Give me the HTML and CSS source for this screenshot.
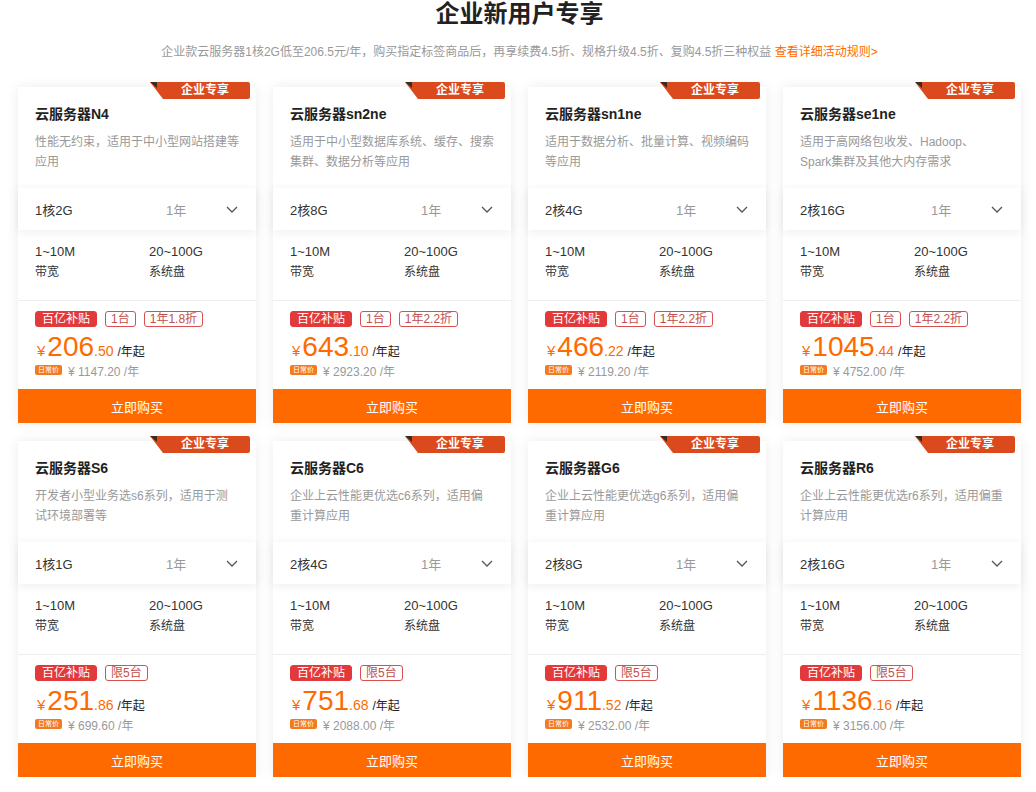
FILE: index.html
```html
<!DOCTYPE html>
<html lang="zh-CN">
<head>
    <meta charset="UTF-8">
    <meta name="viewport" content="width=device-width, initial-scale=1.0">
    <title>企业新用户专享</title>
    <link rel="stylesheet" href="styles.css">
</head>
<body>

    <div class="promo">
        <h1 class="promo-title">企业新用户专享</h1>
        <p class="promo-sub">企业款云服务器1核2G低至206.5元/年，购买指定标签商品后，再享续费4.5折、规格升级4.5折、复购4.5折三种权益 <a href="#">查看详细活动规则&gt;</a></p>

        <div class="card-grid">

            <!-- N4 -->
            <div class="card">
                <div class="badge">企业专享</div>
                <div class="card-head">
                    <div class="card-name">云服务器N4</div>
                    <div class="card-desc">性能无约束，适用于中小型网站搭建等应用</div>
                </div>
                <div class="spec-select">
                    <span class="spec-cpu">1核2G</span>
                    <span class="spec-year">1年</span>
                    <svg class="chevron" width="12" height="7" viewBox="0 0 12 7"><polyline points="1,1 6,6 11,1" fill="none" stroke="#555" stroke-width="1.3"/></svg>
                </div>
                <div class="spec-list">
                    <div><div class="spec-val">1~10M</div><div class="spec-lbl">带宽</div></div>
                    <div><div class="spec-val">20~100G</div><div class="spec-lbl">系统盘</div></div>
                </div>
                <div class="price-box">
                    <div class="tags"><span class="tag tag-red">百亿补贴</span><span class="tag">1台</span><span class="tag">1年1.8折</span></div>
                    <div class="price"><span class="yen">¥</span><span class="int">206</span><span class="dec">.50</span><span class="unit">/年起</span></div>
                    <div class="old-price"><span class="daily">日常价</span>¥ 1147.20 /年</div>
                </div>
                <button class="buy">立即购买</button>
            </div>

            <!-- sn2ne -->
            <div class="card">
                <div class="badge">企业专享</div>
                <div class="card-head">
                    <div class="card-name">云服务器sn2ne</div>
                    <div class="card-desc">适用于中小型数据库系统、缓存、搜索集群、数据分析等应用</div>
                </div>
                <div class="spec-select">
                    <span class="spec-cpu">2核8G</span>
                    <span class="spec-year">1年</span>
                    <svg class="chevron" width="12" height="7" viewBox="0 0 12 7"><polyline points="1,1 6,6 11,1" fill="none" stroke="#555" stroke-width="1.3"/></svg>
                </div>
                <div class="spec-list">
                    <div><div class="spec-val">1~10M</div><div class="spec-lbl">带宽</div></div>
                    <div><div class="spec-val">20~100G</div><div class="spec-lbl">系统盘</div></div>
                </div>
                <div class="price-box">
                    <div class="tags"><span class="tag tag-red">百亿补贴</span><span class="tag">1台</span><span class="tag">1年2.2折</span></div>
                    <div class="price"><span class="yen">¥</span><span class="int">643</span><span class="dec">.10</span><span class="unit">/年起</span></div>
                    <div class="old-price"><span class="daily">日常价</span>¥ 2923.20 /年</div>
                </div>
                <button class="buy">立即购买</button>
            </div>

            <!-- sn1ne -->
            <div class="card">
                <div class="badge">企业专享</div>
                <div class="card-head">
                    <div class="card-name">云服务器sn1ne</div>
                    <div class="card-desc">适用于数据分析、批量计算、视频编码等应用</div>
                </div>
                <div class="spec-select">
                    <span class="spec-cpu">2核4G</span>
                    <span class="spec-year">1年</span>
                    <svg class="chevron" width="12" height="7" viewBox="0 0 12 7"><polyline points="1,1 6,6 11,1" fill="none" stroke="#555" stroke-width="1.3"/></svg>
                </div>
                <div class="spec-list">
                    <div><div class="spec-val">1~10M</div><div class="spec-lbl">带宽</div></div>
                    <div><div class="spec-val">20~100G</div><div class="spec-lbl">系统盘</div></div>
                </div>
                <div class="price-box">
                    <div class="tags"><span class="tag tag-red">百亿补贴</span><span class="tag">1台</span><span class="tag">1年2.2折</span></div>
                    <div class="price"><span class="yen">¥</span><span class="int">466</span><span class="dec">.22</span><span class="unit">/年起</span></div>
                    <div class="old-price"><span class="daily">日常价</span>¥ 2119.20 /年</div>
                </div>
                <button class="buy">立即购买</button>
            </div>

            <!-- se1ne -->
            <div class="card">
                <div class="badge">企业专享</div>
                <div class="card-head">
                    <div class="card-name">云服务器se1ne</div>
                    <div class="card-desc">适用于高网络包收发、Hadoop、Spark集群及其他大内存需求</div>
                </div>
                <div class="spec-select">
                    <span class="spec-cpu">2核16G</span>
                    <span class="spec-year">1年</span>
                    <svg class="chevron" width="12" height="7" viewBox="0 0 12 7"><polyline points="1,1 6,6 11,1" fill="none" stroke="#555" stroke-width="1.3"/></svg>
                </div>
                <div class="spec-list">
                    <div><div class="spec-val">1~10M</div><div class="spec-lbl">带宽</div></div>
                    <div><div class="spec-val">20~100G</div><div class="spec-lbl">系统盘</div></div>
                </div>
                <div class="price-box">
                    <div class="tags"><span class="tag tag-red">百亿补贴</span><span class="tag">1台</span><span class="tag">1年2.2折</span></div>
                    <div class="price"><span class="yen">¥</span><span class="int">1045</span><span class="dec">.44</span><span class="unit">/年起</span></div>
                    <div class="old-price"><span class="daily">日常价</span>¥ 4752.00 /年</div>
                </div>
                <button class="buy">立即购买</button>
            </div>

            <!-- S6 -->
            <div class="card">
                <div class="badge">企业专享</div>
                <div class="card-head">
                    <div class="card-name">云服务器S6</div>
                    <div class="card-desc">开发者小型业务选s6系列，适用于测试环境部署等</div>
                </div>
                <div class="spec-select">
                    <span class="spec-cpu">1核1G</span>
                    <span class="spec-year">1年</span>
                    <svg class="chevron" width="12" height="7" viewBox="0 0 12 7"><polyline points="1,1 6,6 11,1" fill="none" stroke="#555" stroke-width="1.3"/></svg>
                </div>
                <div class="spec-list">
                    <div><div class="spec-val">1~10M</div><div class="spec-lbl">带宽</div></div>
                    <div><div class="spec-val">20~100G</div><div class="spec-lbl">系统盘</div></div>
                </div>
                <div class="price-box">
                    <div class="tags"><span class="tag tag-red">百亿补贴</span><span class="tag">限5台</span></div>
                    <div class="price"><span class="yen">¥</span><span class="int">251</span><span class="dec">.86</span><span class="unit">/年起</span></div>
                    <div class="old-price"><span class="daily">日常价</span>¥ 699.60 /年</div>
                </div>
                <button class="buy">立即购买</button>
            </div>

            <!-- C6 -->
            <div class="card">
                <div class="badge">企业专享</div>
                <div class="card-head">
                    <div class="card-name">云服务器C6</div>
                    <div class="card-desc">企业上云性能更优选c6系列，适用偏重计算应用</div>
                </div>
                <div class="spec-select">
                    <span class="spec-cpu">2核4G</span>
                    <span class="spec-year">1年</span>
                    <svg class="chevron" width="12" height="7" viewBox="0 0 12 7"><polyline points="1,1 6,6 11,1" fill="none" stroke="#555" stroke-width="1.3"/></svg>
                </div>
                <div class="spec-list">
                    <div><div class="spec-val">1~10M</div><div class="spec-lbl">带宽</div></div>
                    <div><div class="spec-val">20~100G</div><div class="spec-lbl">系统盘</div></div>
                </div>
                <div class="price-box">
                    <div class="tags"><span class="tag tag-red">百亿补贴</span><span class="tag">限5台</span></div>
                    <div class="price"><span class="yen">¥</span><span class="int">751</span><span class="dec">.68</span><span class="unit">/年起</span></div>
                    <div class="old-price"><span class="daily">日常价</span>¥ 2088.00 /年</div>
                </div>
                <button class="buy">立即购买</button>
            </div>

            <!-- G6 -->
            <div class="card">
                <div class="badge">企业专享</div>
                <div class="card-head">
                    <div class="card-name">云服务器G6</div>
                    <div class="card-desc">企业上云性能更优选g6系列，适用偏重计算应用</div>
                </div>
                <div class="spec-select">
                    <span class="spec-cpu">2核8G</span>
                    <span class="spec-year">1年</span>
                    <svg class="chevron" width="12" height="7" viewBox="0 0 12 7"><polyline points="1,1 6,6 11,1" fill="none" stroke="#555" stroke-width="1.3"/></svg>
                </div>
                <div class="spec-list">
                    <div><div class="spec-val">1~10M</div><div class="spec-lbl">带宽</div></div>
                    <div><div class="spec-val">20~100G</div><div class="spec-lbl">系统盘</div></div>
                </div>
                <div class="price-box">
                    <div class="tags"><span class="tag tag-red">百亿补贴</span><span class="tag">限5台</span></div>
                    <div class="price"><span class="yen">¥</span><span class="int">911</span><span class="dec">.52</span><span class="unit">/年起</span></div>
                    <div class="old-price"><span class="daily">日常价</span>¥ 2532.00 /年</div>
                </div>
                <button class="buy">立即购买</button>
            </div>

            <!-- R6 -->
            <div class="card">
                <div class="badge">企业专享</div>
                <div class="card-head">
                    <div class="card-name">云服务器R6</div>
                    <div class="card-desc">企业上云性能更优选r6系列，适用偏重计算应用</div>
                </div>
                <div class="spec-select">
                    <span class="spec-cpu">2核16G</span>
                    <span class="spec-year">1年</span>
                    <svg class="chevron" width="12" height="7" viewBox="0 0 12 7"><polyline points="1,1 6,6 11,1" fill="none" stroke="#555" stroke-width="1.3"/></svg>
                </div>
                <div class="spec-list">
                    <div><div class="spec-val">1~10M</div><div class="spec-lbl">带宽</div></div>
                    <div><div class="spec-val">20~100G</div><div class="spec-lbl">系统盘</div></div>
                </div>
                <div class="price-box">
                    <div class="tags"><span class="tag tag-red">百亿补贴</span><span class="tag">限5台</span></div>
                    <div class="price"><span class="yen">¥</span><span class="int">1136</span><span class="dec">.16</span><span class="unit">/年起</span></div>
                    <div class="old-price"><span class="daily">日常价</span>¥ 3156.00 /年</div>
                </div>
                <button class="buy">立即购买</button>
            </div>

        </div>
    </div>

</body>
</html>
```

FILE: styles.css
```css
/* página */
body {
    margin: 0;
    background-color: #fff;
    font-family: "Liberation Sans", Arial, "Noto Sans CJK SC", sans-serif;
    color: #333;
}

.promo {
    width: 1003px;
    margin: 0 0 0 18px;
}

.promo-title {
    margin: 0;
    font-size: 24px;
    line-height: 28px;
    font-weight: bold;
    color: #222;
    text-align: center;
}

.promo-sub {
    margin: 15px 0 0;
    font-size: 12px;
    line-height: 18px;
    color: #999;
    text-align: center;
}

.promo-sub a {
    color: #ff6a00;
    text-decoration: none;
}

.card-grid {
    display: grid;
    grid-template-columns: repeat(4, 238px);
    column-gap: 17px;
    row-gap: 18px;
    margin-top: 26px;
}

/* card */
.card {
    position: relative;
    background-color: #fff;
    box-shadow: 0 0 12px rgba(0, 0, 0, 0.08);
    display: flex;
    flex-direction: column;
}

.badge {
    position: absolute;
    top: -5px;
    right: 6px;
    width: 100px;
    height: 17px;
    padding-left: 10px;
    box-sizing: border-box;
    background-color: #db4a1d;
    color: #fff;
    font-size: 12px;
    font-weight: bold;
    line-height: 17px;
    text-align: center;
    clip-path: polygon(0 0, 100% 0, 100% 100%, 13px 100%);
    border-radius: 0 2px 2px 0;
}

.badge::before {
    content: "";
    position: absolute;
    left: 0;
    top: 0;
    width: 7px;
    height: 6px;
    background-color: #3b2a22;
    clip-path: polygon(0 0, 100% 0, 100% 100%);
}

.card-head {
    height: 101px;
    box-sizing: border-box;
    padding: 17px 17px 0;
}

.card-name {
    font-size: 14px;
    line-height: 20px;
    font-weight: bold;
    color: #222;
}

.card-desc {
    margin-top: 8px;
    font-size: 12px;
    line-height: 20px;
    color: #999;
}

.spec-select {
    display: grid;
    grid-template-columns: 131px 1fr auto;
    align-items: center;
    height: 42px;
    padding: 0 18px 0 17px;
    background-color: #fff;
    box-shadow: 0 2px 10px rgba(0, 0, 0, 0.07);
    font-size: 13px;
}

.spec-cpu {
    color: #333;
}

.spec-year {
    color: #999;
}

.chevron {
    display: block;
}

.spec-list {
    display: grid;
    grid-template-columns: 114px 1fr;
    padding: 12px 17px 18px;
    border-bottom: 1px solid #eee;
}

.spec-val {
    font-size: 13px;
    line-height: 20px;
    color: #333;
}

.spec-lbl {
    font-size: 12px;
    line-height: 20px;
    color: #333;
}

/* preço */
.price-box {
    padding: 10px 17px 10px;
}

.tags {
    display: flex;
    gap: 8px;
}

.tag {
    height: 16px;
    padding: 0 5px;
    border: 1px solid #d9504e;
    border-radius: 3px;
    box-sizing: border-box;
    font-size: 12px;
    line-height: 14px;
    color: #c0504d;
}

.tag-red {
    background-color: #e2393b;
    border-color: #e2393b;
    color: #fff;
    padding: 0 6px;
}

.price {
    margin-top: 6px;
    height: 28px;
    line-height: 28px;
    color: #ff6a00;
    white-space: nowrap;
}

.yen {
    font-size: 15px;
    margin: 0 2px 0 2px;
}

.int {
    font-size: 28px;
}

.dec {
    font-size: 14px;
}

.unit {
    margin-left: 4px;
    font-size: 12px;
    color: #222;
}

.old-price {
    display: flex;
    align-items: center;
    height: 18px;
    font-size: 12px;
    color: #999;
}

.daily {
    width: 27px;
    height: 10px;
    margin-right: 6px;
    border-radius: 2px;
    background-color: #f47a1f;
    color: #fff;
    font-size: 7px;
    line-height: 10px;
    text-align: center;
}

.buy {
    height: 34px;
    border: none;
    background-color: #ff6a00;
    color: #fff;
    font-family: inherit;
    font-size: 13px;
    cursor: pointer;
}

.buy:hover {
    background-color: #f25f00;
}
```
